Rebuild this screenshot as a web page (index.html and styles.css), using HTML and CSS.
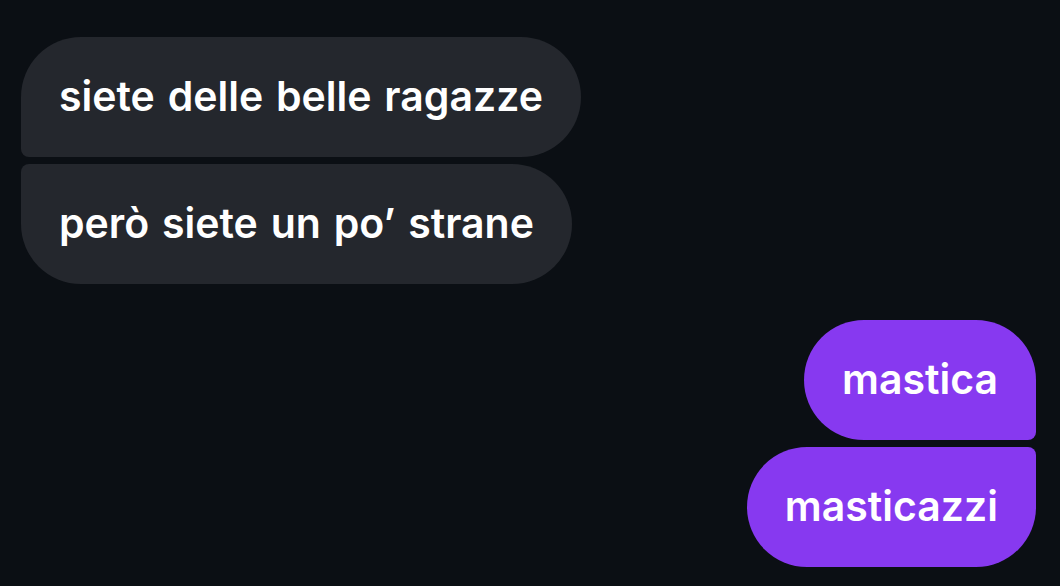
FILE: index.html
```html
<!DOCTYPE html>
<html lang="it">
<head>
<meta charset="utf-8">
<link rel="stylesheet" href="styles.css">
</head>
<body>
<div class="chat">
  <div class="group incoming">
    <div class="bubble in first">siete delle belle ragazze</div>
    <div class="bubble in last">però siete un po’ strane</div>
  </div>
  <div class="group outgoing">
    <div class="bubble out first">mastica</div>
    <div class="bubble out last">masticazzi</div>
  </div>
</div>
</body>
</html>
```
FILE: styles.css
```css
html, body {
  margin: 0;
  padding: 0;
  background: #0b0f14;
  width: 1060px;
  height: 586px;
  overflow: hidden;
}
.chat {
  display: flex;
  flex-direction: column;
  gap: 36px;
  padding: 37px 24px 0 21px;
  font-family: Inter, "Noto Sans", sans-serif;
}
.group {
  display: flex;
  flex-direction: column;
  gap: 7px;
}
.incoming { align-items: flex-start; }
.outgoing { align-items: flex-end; }
.bubble {
  height: 120px;
  box-sizing: border-box;
  display: flex;
  align-items: center;
  padding: 0 38px 2px;
  color: #fff;
  font-size: 41px;
  font-weight: 600;
  letter-spacing: 0;
  word-spacing: 2.5px;
}
.in { background: #24272d; }
.out { background: #8739f0; }
.in.first { border-radius: 60px 60px 60px 8px; }
.in.last { border-radius: 8px 60px 60px 60px; }
.out.first { border-radius: 60px 60px 8px 60px; }
.out.last { border-radius: 60px 8px 60px 60px; }
```
